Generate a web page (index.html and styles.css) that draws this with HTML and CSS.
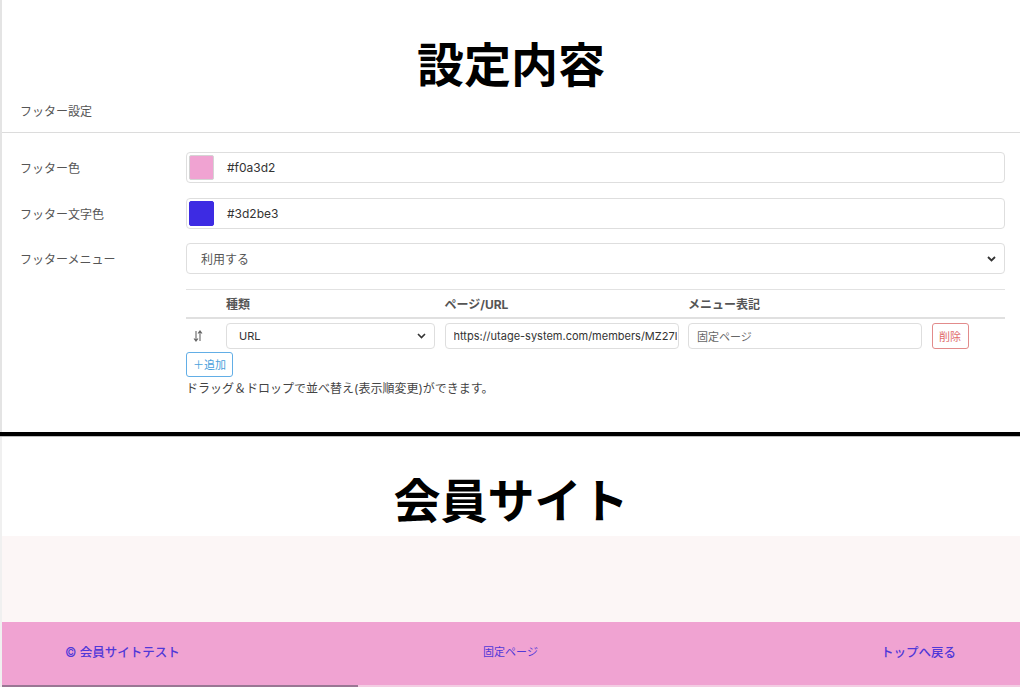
FILE: index.html
```html
<!DOCTYPE html>
<html lang="ja">
<head>
<meta charset="utf-8">
<title>設定内容</title>
<link rel="stylesheet" href="styles.css">
</head>
<body>
<div class="page">
  <section class="top">
    <h1 class="big-title">設定内容</h1>
    <div class="card">
      <div class="card-header">フッター設定</div>
      <div class="card-body">
        <div class="form-row">
          <div class="label">フッター色</div>
          <div class="field color-field">
            <span class="swatch swatch-pink"></span>
            <span class="field-text">#f0a3d2</span>
          </div>
        </div>
        <div class="form-row">
          <div class="label">フッター文字色</div>
          <div class="field color-field">
            <span class="swatch swatch-blue"></span>
            <span class="field-text">#3d2be3</span>
          </div>
        </div>
        <div class="form-row">
          <div class="label">フッターメニュー</div>
          <div class="field select-field">
            <span class="select-text">利用する</span>
            <svg class="chev" width="9" height="6" viewBox="0 0 9 6"><path d="M1 1l3.5 3.5L8 1" fill="none" stroke="#333" stroke-width="1.8"/></svg>
          </div>
        </div>
        <div class="form-row">
          <div class="label"></div>
          <div class="menu-table">
            <div class="tr th">
              <div></div>
              <div>種類</div>
              <div>ページ/URL</div>
              <div>メニュー表記</div>
              <div></div>
            </div>
            <div class="tr td">
              <div class="drag">
                <svg width="10" height="12" viewBox="0 0 10 12"><path d="M3 1v10M1 8.5L3 11l2-2.5M7 11V1M5 3.5L7 1l2 2.5" fill="none" stroke="#666" stroke-width="1.1"/></svg>
              </div>
              <div class="small-field small-select">
                <span>URL</span>
                <svg class="chev" width="9" height="6" viewBox="0 0 9 6"><path d="M1 1l3.5 3.5L8 1" fill="none" stroke="#333" stroke-width="1.6"/></svg>
              </div>
              <div class="small-field"><span class="clip">https://utage-system.com/members/MZ27l</span></div>
              <div class="small-field muted"><span>固定ページ</span></div>
              <div><span class="btn-del">削除</span></div>
            </div>
            <div class="add-row"><span class="btn-add">＋追加</span></div>
            <p class="hint">ドラッグ＆ドロップで並べ替え(表示順変更)ができます。</p>
          </div>
        </div>
      </div>
    </div>
  </section>
  <div class="divider"></div>
  <section class="site">
    <h1 class="big-title second">会員サイト</h1>
    <div class="site-body"></div>
    <footer class="site-footer">
      <span class="f-left">© 会員サイトテスト</span>
      <span class="f-center">固定ページ</span>
      <span class="f-right">トップへ戻る</span>
    </footer>
    <div class="bottom-strip"><span></span></div>
  </section>
</div>
</body>
</html>
```
FILE: styles.css
```css
* { box-sizing: border-box; }
html, body {
  margin: 0;
  padding: 0;
  background: #fff;
  font-family: Inter, "Noto Sans CJK JP", sans-serif;
  color: #444;
}
.page {
  width: 1020px;
  height: 687px;
  overflow: hidden;
}
.top {
  border-left: 2px solid #e4e4e4;
}
.big-title {
  margin: 0;
  text-align: center;
  font-family: "Noto Sans CJK JP", sans-serif;
  font-weight: 700;
  font-size: 47px;
  line-height: 52px;
  color: #000;
  padding: 36px 0 4px;
  letter-spacing: 0;
}
.card {
  padding-bottom: 34px;
}
.card-header {
  height: 41px;
  line-height: 40px;
  padding-left: 18px;
  font-size: 12px;
  color: #555;
  border-bottom: 1px solid #dcdcdc;
}
.card-body {
  padding: 19px 15px 0 18px;
  display: flex;
  flex-direction: column;
  gap: 14.5px;
}
.form-row {
  display: grid;
  grid-template-columns: 166px 1fr;
  align-items: center;
}
.label {
  font-size: 12px;
  color: #555;
}
.field {
  height: 31px;
  border: 1px solid #dedede;
  border-radius: 4px;
  display: flex;
  align-items: center;
  font-size: 12px;
  color: #333;
}
.color-field { padding-left: 2px; }
.swatch {
  width: 25px;
  height: 25px;
  border-radius: 2px;
  margin-right: 13px;
  border: 1px solid #d4d4d4;
}
.swatch-pink { background: #f0a3d2; }
.swatch-blue { background: #3d2be3; border-color: #3d2be3; }
.select-field {
  padding: 0 8px 0 14px;
  justify-content: space-between;
  color: #555;
}
.chev { display: block; }
.menu-table {
  border-top: 1px solid #e2e2e2;
}
.tr {
  display: grid;
  grid-template-columns: 30.5px 209px 234px 234px auto;
  column-gap: 9.5px;
  align-items: center;
}
.th {
  height: 29px;
  border-bottom: 2px solid #e0e0e0;
  font-size: 12px;
  font-weight: 700;
  color: #555;
}
.td {
  padding-top: 4px;
}
.drag { padding-left: 7px; display: flex; align-items: center; }
.small-field {
  height: 26px;
  border: 1px solid #dedede;
  border-radius: 4px;
  display: flex;
  align-items: center;
  padding-left: 8px;
  font-size: 11px;
  color: #333;
  overflow: hidden;
  white-space: nowrap;
}
.small-select {
  padding: 0 8px 0 12px;
  justify-content: space-between;
}
.muted { color: #666; }
.clip { overflow: hidden; }
.btn-del {
  display: inline-flex;
  align-items: center;
  justify-content: center;
  width: 37px;
  height: 26px;
  border: 1px solid #e28b8b;
  border-radius: 3px;
  color: #e06a6a;
  font-size: 11px;
}
.add-row { padding-top: 3px; }
.btn-add {
  display: inline-flex;
  align-items: center;
  justify-content: center;
  width: 47px;
  height: 25px;
  border: 1px solid #62aee6;
  border-radius: 3px;
  color: #4a9fdc;
  font-size: 11px;
}
.hint {
  margin: 3px 0 0;
  font-size: 12px;
  line-height: 18px;
  color: #444;
}
.divider {
  height: 5px;
  background: #000;
  border-bottom: 1px solid #bdbdbd;
}
.site {
  border-left: 2px solid #f0f0f0;
}
.big-title.second {
  padding: 35px 0 12px;
}
.site-body {
  height: 86px;
  background: #fcf6f6;
}
.site-footer {
  height: 63px;
  background: #f0a3d2;
  display: grid;
  grid-template-columns: 1fr auto 1fr;
  align-items: center;
  padding: 0 64px 4px 63px;
  color: #5038d8;
}
.f-left { justify-self: start; font-size: 12.5px; font-weight: 500; }
.f-center { font-size: 11px; }
.f-right { justify-self: end; font-size: 12.5px; font-weight: 500; }
.bottom-strip {
  height: 3px;
  background: #f3cde3;
}
.bottom-strip span {
  display: block;
  width: 356px;
  height: 2px;
  background: #9a7794;
}
```
